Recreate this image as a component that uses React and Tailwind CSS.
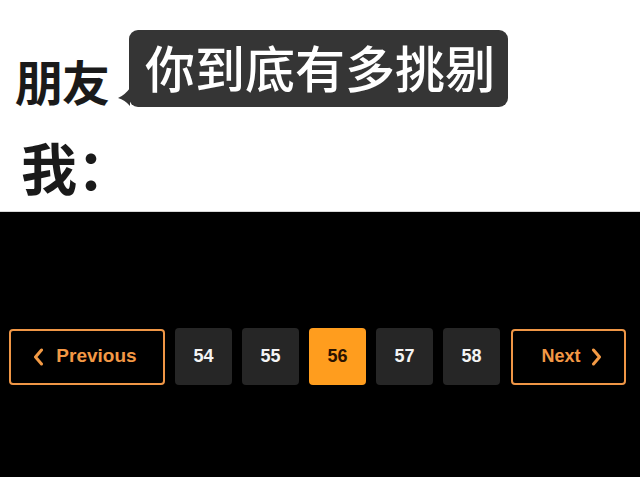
import React from "react";

const cjk = { fontFamily: '"Noto Sans CJK SC", "Noto Sans", sans-serif' };
const latin = { fontFamily: '"Liberation Sans", Arial, sans-serif' };

function ChevLeft() {
  return (
    <svg width="11" height="18" viewBox="0 0 11 18" className="shrink-0">
      <polyline points="8.5,2 2.5,9 8.5,16" fill="none" stroke="#f39a45" strokeWidth="3" strokeLinecap="round" strokeLinejoin="round" />
    </svg>
  );
}
function ChevRight() {
  return (
    <svg width="11" height="18" viewBox="0 0 11 18" className="shrink-0">
      <polyline points="2.5,2 8.5,9 2.5,16" fill="none" stroke="#f39a45" strokeWidth="3" strokeLinecap="round" strokeLinejoin="round" />
    </svg>
  );
}

export default function App() {
  const pages = [54, 55, 56, 57, 58];
  return (
    <div className="w-[640px] h-[477px] flex flex-col overflow-hidden">
      <div className="h-[212px] bg-white flex flex-col border-b border-[#d8d8d8]" style={cjk}>
        <div className="flex items-start mt-[30px] ml-[15px] h-[77px]">
          <div className="mt-[26px] text-[48px] leading-none font-bold text-[#1a1a1a] tracking-[-1px]">朋友</div>
          <div className="relative ml-[20px] h-[77px] w-[379px] bg-[#353535] rounded-[9px] flex items-center pl-[16px]">
            <svg className="absolute left-[-12px] top-[58px]" width="14" height="18" viewBox="0 0 14 18">
              <path d="M13 0 L13 18 Q8 12 1 10 Q8 7 13 0 Z" fill="#353535" />
            </svg>
            <span className="text-[50px] leading-none font-medium text-white mt-[-6px]">你到底有多挑剔</span>
          </div>
        </div>
        <div className="mt-[31px] ml-[21px] text-[56px] leading-none font-bold text-[#1a1a1a]">我：</div>
      </div>
      <div className="flex-1 bg-black pt-[116px]" style={latin}>
        <div className="flex items-center">
          <div className="ml-[9px] w-[156px] h-[56px] border-2 border-[#ef9646] rounded-[4px] flex items-center justify-center gap-[12px] pr-[4px]">
            <ChevLeft />
            <span className="text-[19px] font-bold text-[#f39845]">Previous</span>
          </div>
          <div className="flex ml-[10px] gap-[10px]">
            {pages.map((p) =>
              p === 56 ? (
                <div key={p} className="w-[57px] h-[57px] rounded-[4px] bg-[#ff9d1e] flex items-center justify-center text-[18px] font-bold text-[#2b1300]">
                  {p}
                </div>
              ) : (
                <div key={p} className="w-[57px] h-[57px] rounded-[4px] bg-[#262626] flex items-center justify-center text-[18px] font-bold text-[#f4f4f4]">
                  {p}
                </div>
              )
            )}
          </div>
          <div className="ml-[11px] w-[115px] h-[56px] border-2 border-[#ef9646] rounded-[4px] flex items-center justify-center gap-[10px] pl-[6px]">
            <span className="text-[18px] font-bold text-[#f39845]">Next</span>
            <ChevRight />
          </div>
        </div>
      </div>
    </div>
  );
}
